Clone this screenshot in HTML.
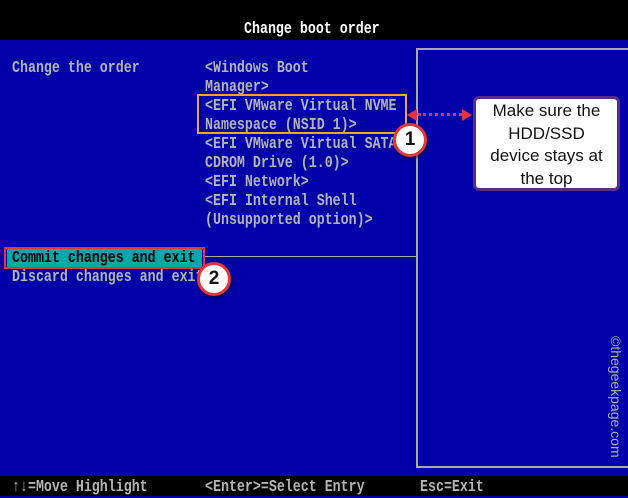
<!DOCTYPE html>
<html><head><style>
body{margin:0;width:628px;height:496px;overflow:hidden;background:#0000a8;position:relative;font-family:"Liberation Mono",monospace;}
.top{position:absolute;left:0;top:0;width:628px;height:40px;background:#000;}
.bot{position:absolute;left:0;top:476px;width:628px;height:20px;background:#000;}
.t{position:absolute;color:#b4b4b4;font-size:13.3px;line-height:19px;height:19px;white-space:pre;transform:scaleY(1.25);transform-origin:0 50%;font-weight:bold;}
.w{color:#fff}
.ln{position:absolute;background:#a8a8a8;}
.circ{position:absolute;width:28px;height:28px;border-radius:50%;background:#fff;border:3px solid #e8333a;box-shadow:1px 2px 3px rgba(0,0,0,.5);font:bold 19px "Liberation Sans",sans-serif;color:#111;text-align:center;line-height:28px;}
</style></head><body>
<div class="top"></div>
<div class="t w" style="left:244px;top:19px;">Change boot order</div>
<div class="ln" style="left:416px;top:48px;width:212px;height:2px"></div>
<div class="ln" style="left:416px;top:48px;width:2px;height:420px"></div>
<div class="ln" style="left:416px;top:466px;width:212px;height:2px"></div>
<div class="ln" style="left:205px;top:256px;width:211px;height:1px"></div>
<div class="t" style="left:12px;top:58px;">Change the order</div>
<div class="t" style="left:205px;top:58px;">&lt;Windows Boot</div>
<div class="t" style="left:205px;top:77px;">Manager&gt;</div>
<div class="t" style="left:205px;top:96px;">&lt;EFI VMware Virtual NVME</div>
<div class="t" style="left:205px;top:115px;">Namespace (NSID 1)&gt;</div>
<div class="t" style="left:205px;top:134px;">&lt;EFI VMware Virtual SATA</div>
<div class="t" style="left:205px;top:153px;">CDROM Drive (1.0)&gt;</div>
<div class="t" style="left:205px;top:172px;">&lt;EFI Network&gt;</div>
<div class="t" style="left:205px;top:191px;">&lt;EFI Internal Shell</div>
<div class="t" style="left:205px;top:210px;">(Unsupported option)&gt;</div>
<div style="position:absolute;left:7px;top:249px;width:195px;height:18px;background:#00a8a8"></div>
<div style="position:absolute;left:4px;top:247px;width:197px;height:18px;border:2px solid #e8333a"></div>
<div class="t" style="left:12px;top:248px;color:#000">Commit changes and exit</div>
<div class="t" style="left:12px;top:267px;">Discard changes and exit</div>
<div style="position:absolute;left:197px;top:94px;width:206px;height:36px;border:2px solid #f5a623"></div>
<div style="position:absolute;left:418px;top:113px;width:50px;height:0;border-top:3px dotted #e8333a"></div>
<div style="position:absolute;left:407px;top:109px;width:0;height:0;border-top:6px solid transparent;border-bottom:6px solid transparent;border-right:10px solid #e8333a"></div>
<div style="position:absolute;left:462px;top:109px;width:0;height:0;border-top:6px solid transparent;border-bottom:6px solid transparent;border-left:10px solid #e8333a"></div>
<div style="position:absolute;left:473px;top:96px;width:141px;height:88px;background:#fff;border:3px solid #5b2c8c;border-radius:6px;font:17px/22.5px 'Liberation Sans',sans-serif;color:#111;text-align:center;padding-top:1px">Make sure the<br>HDD/SSD<br>device stays at<br>the top</div>
<div class="circ" style="left:393px;top:123px">1</div>
<div class="circ" style="left:197px;top:262px">2</div>
<div style="position:absolute;left:548px;top:396px;width:136px;transform:rotate(90deg);font:14px 'Liberation Sans',sans-serif;color:#b0b0b0;white-space:nowrap">©thegeekpage.com</div>
<div class="bot"></div>
<div class="t" style="left:12px;top:477px;">↑↓=Move Highlight</div>
<div class="t" style="left:205px;top:477px;">&lt;Enter&gt;=Select Entry</div>
<div class="t" style="left:420px;top:477px;">Esc=Exit</div>
</body></html>
